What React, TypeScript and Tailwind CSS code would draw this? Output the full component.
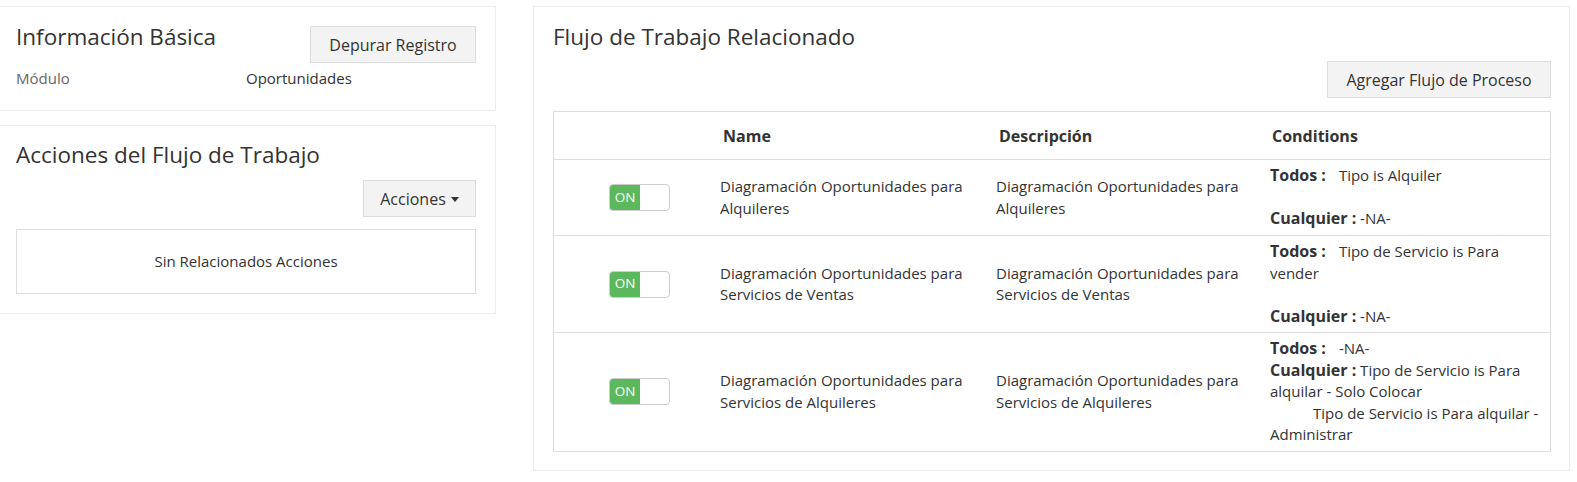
import React from "react";

const font = { fontFamily: '"Open Sans", "Noto Sans", sans-serif' };

function Toggle() {
  return (
    <div className="flex h-[27px] w-[61px] overflow-hidden rounded-[4px] border border-[#cccccc] bg-white">
      <div className="flex h-full w-[30px] items-center justify-center bg-[#5cb85c] text-[13.5px] text-white">ON</div>
    </div>
  );
}

function Btn({ children, className = "" }: { children: React.ReactNode; className?: string }) {
  return (
    <div className={"flex h-[37px] items-center justify-center border border-[#dddddd] bg-[#f3f3f3] text-[16px] text-[#333333] " + className}>
      {children}
    </div>
  );
}

const B = ({ children }: { children: React.ReactNode }) => (
  <span className="text-[16px] font-bold text-[#333333]">{children}</span>
);

type Row = { name: string[]; cond: React.ReactNode; minH?: string };

const rows: Row[] = [
  {
    name: ["Diagramación Oportunidades para", "Alquileres"],
    minH: "min-h-[76px]",
    cond: (
      <>
        <div><B>Todos :</B><span className="ml-[13px]">Tipo is Alquiler</span></div>
        <div>&nbsp;</div>
        <div><B>Cualquier :</B> -NA-</div>
      </>
    ),
  },
  {
    name: ["Diagramación Oportunidades para", "Servicios de Ventas"],
    cond: (
      <>
        <div><B>Todos :</B><span className="ml-[13px]">Tipo de Servicio is Para</span></div>
        <div>vender</div>
        <div>&nbsp;</div>
        <div><B>Cualquier :</B> -NA-</div>
      </>
    ),
  },
  {
    name: ["Diagramación Oportunidades para", "Servicios de Alquileres"],
    cond: (
      <>
        <div><B>Todos :</B><span className="ml-[13px]">-NA-</span></div>
        <div><B>Cualquier :</B> Tipo de Servicio is Para</div>
        <div>alquilar - Solo Colocar</div>
        <div className="pl-[43px]">Tipo de Servicio is Para alquilar -</div>
        <div>Administrar</div>
      </>
    ),
  },
];

export default function App() {
  return (
    <div className="min-h-[482px] w-[1577px] bg-white pt-[6px] text-[15px] text-[#333333]" style={font}>
      <div className="flex items-start">
        {/* left column */}
        <div className="flex w-[496px] flex-col gap-[14px]">
          <div className="border border-l-0 border-[#ececec] pb-[22px] pl-[16px] pr-[19px] pt-[14px]">
            <div className="flex items-start justify-between">
              <div className="pt-[1px] text-[22.5px] leading-[30px] text-[#333333]">Información Básica</div>
              <Btn className="mt-[5px] w-[166px]">Depurar Registro</Btn>
            </div>
            <div className="mt-[5px] flex leading-[20px]">
              <div className="w-[230px] text-[#666666]">Módulo</div>
              <div>Oportunidades</div>
            </div>
          </div>
          <div className="border border-l-0 border-[#ececec] pb-[19px] pl-[16px] pr-[19px] pt-[14px]">
            <div className="text-[22.5px] leading-[30px] text-[#333333]">Acciones del Flujo de Trabajo</div>
            <div className="mt-[10px] flex justify-end">
              <Btn className="w-[113px] gap-[5px]">
                <span>Acciones</span>
                <span className="mt-[2px] h-0 w-0 border-l-[4px] border-r-[4px] border-t-[5px] border-l-transparent border-r-transparent border-t-[#333333]" />
              </Btn>
            </div>
            <div className="mt-[12px] flex h-[65px] items-center justify-center border border-[#dddddd]">
              Sin Relacionados Acciones
            </div>
          </div>
        </div>

        {/* right panel */}
        <div className="ml-[37px] w-[1037px] border border-[#ececec] pb-[18px] pl-[19px] pr-[18px] pt-[14px]">
          <div className="pt-[1px] text-[22.5px] leading-[30px] text-[#333333]">Flujo de Trabajo Relacionado</div>
          <div className="mt-[9px] flex justify-end">
            <Btn className="w-[224px]">Agregar Flujo de Proceso</Btn>
          </div>
          <div className="mt-[13px] border border-[#dddddd]">
            <div className="grid h-[48px] grid-cols-[154px_277px_275px_1fr] items-center border-b border-[#dddddd] text-[16px] font-bold">
              <div />
              <div className="pl-[15px]">Name</div>
              <div className="pl-[14px]">Descripción</div>
              <div className="pl-[12px]">Conditions</div>
            </div>
            {rows.map((r, i) => (
              <div
                key={i}
                className={
                  "grid grid-cols-[154px_277px_275px_1fr] items-center leading-[21.5px] " +
                  (i < rows.length - 1 ? "border-b border-[#dddddd] " : "") +
                  (r.minH ?? "")
                }
              >
                <div className="pl-[55px]"><Toggle /></div>
                <div className="pl-[12px]">
                  <div>{r.name[0]}</div>
                  <div>{r.name[1]}</div>
                </div>
                <div className="pl-[11px]">
                  <div>{r.name[0]}</div>
                  <div>{r.name[1]}</div>
                </div>
                <div className="whitespace-nowrap pb-[5px] pl-[10px] pt-[5px]">{r.cond}</div>
              </div>
            ))}
          </div>
        </div>
      </div>
    </div>
  );
}
